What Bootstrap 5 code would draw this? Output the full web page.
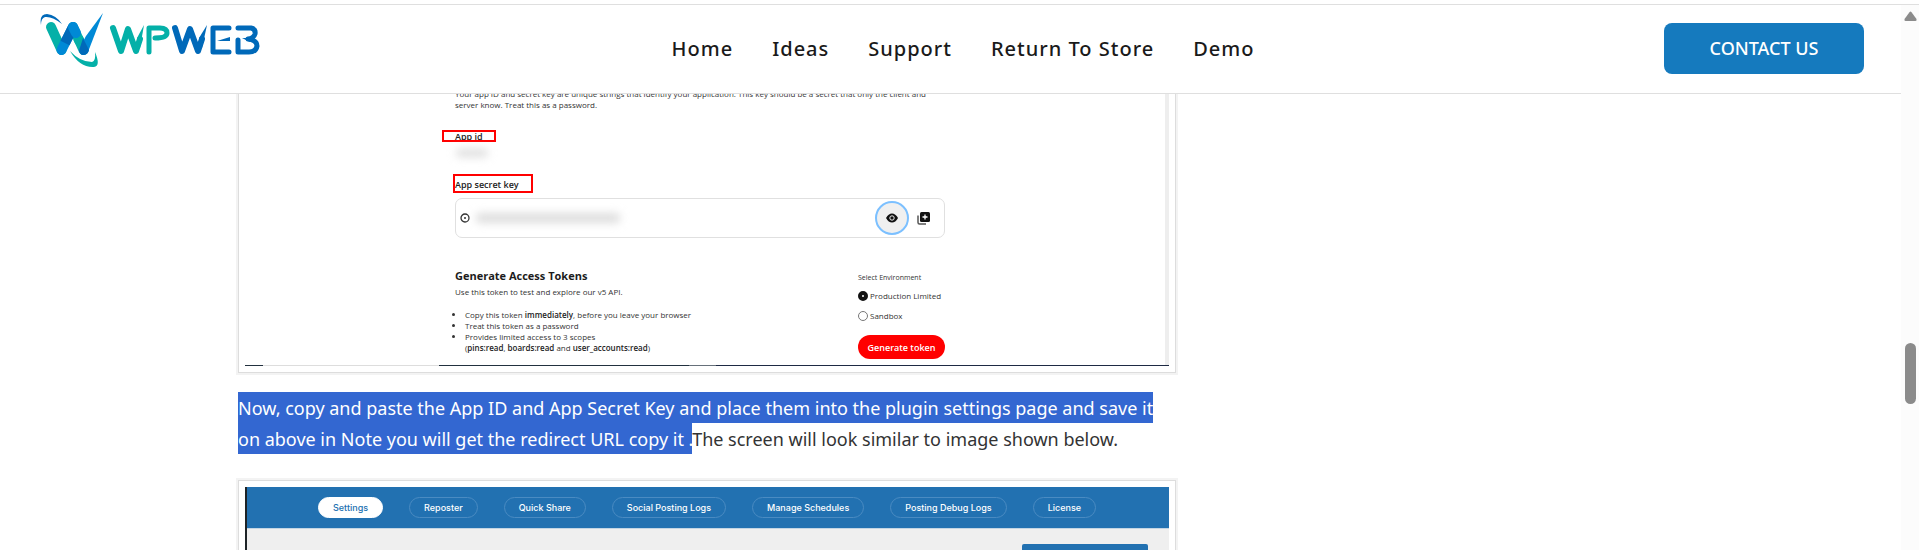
<!DOCTYPE html>
<html lang="en">
<head>
<meta charset="utf-8">
<meta name="viewport" content="width=device-width, initial-scale=1">
<title>WPWeb Documentation</title>
<link rel="stylesheet" href="https://cdn.jsdelivr.net/npm/bootstrap@5.3.0/dist/css/bootstrap.min.css">
<style>
html{background:#fff}
body{font-family:"Open Sans",sans-serif;color:#333;font-size:18px;line-height:31px;height:100vh;overflow:hidden;background:#fff;padding-top:4px}
.window-pane{border-top:1px solid #dfdfdf}
.site-head{height:89px;background:#fff;border-bottom:1px solid #dfdfdf;z-index:5;display:grid;grid-template-columns:1fr auto 1fr;padding:0 37px 2px 40px}
.site-logo{width:220px;height:56px;margin-top:8px}
.site-nav{gap:39px;margin-left:22px;font-family:"Noto Sans",sans-serif;font-size:20px;font-weight:500;letter-spacing:1px}
.site-nav a{color:#1a1a1a;text-decoration:none}
.btn-contact{--bs-btn-bg:#157abe;--bs-btn-color:#fff;--bs-btn-hover-bg:#1269a4;--bs-btn-hover-color:#fff;width:200px;height:51px;border-radius:8px;font-family:"Noto Sans",sans-serif;font-size:18px;font-weight:500}
.page-col{max-width:1425px}
.doc-col{max-width:938px}
.shot{border:1px solid #ddd;box-shadow:0 0 0 2px #f3f3f3;padding:6px;background:#fff}
.first-shot{margin-top:-23px}
.dev{font-size:8px;line-height:11px;color:#333;border-right:4px solid #eee;padding:10px 220px 6px 210px}
.dev b{font-weight:600;color:#222}
.red-box{border:2px solid #f00;color:#222;font-size:9px;font-weight:600}
.box-id{width:54px;height:12px;margin-left:-13px;padding-left:11px;line-height:10px;margin-top:20px;overflow:hidden}
.box-key{width:80px;height:19px;margin-left:-2px;line-height:18px;margin-top:17px}
.smudge{background:#ddd;filter:blur(4px);border-radius:4px}
.smudge-id{width:32px;height:8px;margin:7px 0 0 1px}
.smudge-key{width:144px;height:10px;margin-left:6px}
.key-box{border:1px solid #e0e0e0;border-radius:7px;height:40px;margin-top:5px;padding:0 14px 0 4px}
.eye-btn{width:34px;height:34px;border-radius:50%;border:2px solid #7cc0ff;background:#f0f0f0;padding:0}
.copy-btn{border:0;background:none;padding:0;margin-left:8px;width:13px}
.access{margin-top:30px}
.dev h2{font-size:11px;line-height:16px;font-weight:700;color:#1c1c1c;margin:0 0 2px}
.dev ul{padding-left:10px;margin:12px 0 0}
.env{width:87px;padding-top:5px}
.env legend{font-size:7px;line-height:10px;margin:0 0 7px}
.env label{line-height:12px;white-space:nowrap;gap:2px;margin-bottom:8px}
.env input{appearance:none;flex:none;width:10px;height:10px;border:1px solid #777;border-radius:50%;margin:0}
.env input:checked{border:4px solid #111}
.btn-token{background:#f00;color:#fff;border:0;border-radius:12px;height:24px;width:87px;font-weight:600;font-size:9px;padding:0;margin-top:13px}
.strip{height:1px;background:linear-gradient(90deg,#22313f 0 2%,#ddd 2% 21%,#22313f 21% 48%,#66707a 48% 51%,#1e2a44 51%)}
.lead-text{font-family:"Noto Sans",sans-serif;margin:20px 0 25px;padding-right:8px}
.picked{background:rgba(0,65,198,.8);color:#fff;padding:4px 0 3px}
.plugin{background:#efefef;border-left:2px solid #1d2327}
.plugin-nav{background:#2271b1;border-bottom:1px solid #c3d5e4;height:42px;padding-left:71px;gap:26px;font-family:Inter,sans-serif;font-size:9px;font-weight:500;line-height:19px}
.plugin-nav a{border:1px solid #4a8bc2;border-radius:11px;padding:0 14px;color:#fff;text-decoration:none;white-space:nowrap}
.plugin-nav a.on{background:#fff;border-color:#fff;color:#2271b1}
.save-btn{width:126px;height:28px;background:#2271b1;border:0;border-radius:2px;margin:15px 21px 40px 0}
.rail{width:18px;background:#fcfcfc;border-top:1px solid #dfdfdf;padding-top:6px}
.rail-thumb{width:11px;height:61px;border-radius:6px;background:#8b8b8b;margin-top:322px}
</style>
</head>
<body class="d-flex">
<div class="window-pane flex-grow-1 overflow-hidden">
  <header class="site-head position-relative">
    <a href="#" aria-label="WPWeb">
      <svg class="site-logo d-block" viewBox="40 13 220 56">
        <g fill="none" stroke-linecap="round" stroke-linejoin="round">
          <path d="M51 27 61.500 50" stroke="#04b0a8" stroke-width="10"/>
          <path d="M73 27 83.500 50" stroke="#04b0a8" stroke-width="10"/>
          <path d="M61.500 50 73 27" stroke="#0089d6" stroke-width="10"/>
          <path d="M65 43 73 27" stroke="#0069b9" stroke-width="10" stroke-linecap="butt"/>
          <path d="M73 27 76 33" stroke="#0089d6" stroke-width="10"/>
          <path d="M78 38 80 42" stroke="#04b0a8" stroke-width="10" stroke-linecap="butt"/>
        </g>
        <path d="M103 13 88 52Q86 55 82 55L79 49 86 36Z" fill="#0089d6"/>
        <path d="M79 51 83 38 89 50Q88 55 83 55 80 55 79 51Z" fill="#0069b9"/>
        <path d="M41 25Q39 14 47 14 56 15 62 24 52 16 45 17 41 18 41 25Z" fill="#0069b9"/>
        <path d="M70 51Q80 62 92 62 96 61 95 52 101 66 94 67 80 68 70 51Z" fill="#04b0a8"/>
        <g fill="none" stroke-linecap="round" stroke-linejoin="round" stroke-width="6">
          <g stroke="#04b0a8">
            <path d="M113 28 121 51 128 29 136 51 140 39"/>
            <path d="M149 52V28H160Q167 28 167 33 167 38 155 38" stroke-width="5"/>
          </g>
          <g stroke="#0069b9">
            <path d="M175 28 182 51 190 29 198 51 202 39"/>
            <path d="M229 28H213V52H229" stroke-width="5"/>
            <path d="M238 28H251Q256 29 255 34 254 38 248 39 257 40 257 46 256 52 249 52H238V40" stroke-width="5"/>
          </g>
        </g>
        <path d="M137 38 144 25 140 48Z" fill="#04b0a8"/>
        <path d="M199 38 207 25 202 48Z" fill="#0069b9"/>
        <path d="M217 41 230 37V41ZM242 38 250 38V42Z" fill="#0069b9"/>
      </svg>
    </a>
    <nav class="site-nav d-flex align-items-center">
      <a href="#">Home</a><a href="#">Ideas</a><a href="#">Support</a><a href="#">Return To Store</a><a href="#">Demo</a>
    </nav>
    <div class="d-flex align-items-center justify-content-end"><button type="button" class="btn btn-contact">CONTACT US</button></div>
  </header>
  <main class="page-col mx-auto">
    <div class="doc-col">
      <section class="shot first-shot">
        <div class="dev">
          <div>Your app ID and secret key are unique strings that identify your application. This key should be a secret that only the client and<br>server know. Treat this as a password.</div>
          <div class="red-box box-id">App id</div>
          <div class="smudge smudge-id"></div>
          <div class="red-box box-key">App secret key</div>
          <div class="key-box d-flex align-items-center">
            <svg width="10" height="10" viewBox="0 0 10 10"><circle cx="5" cy="5" r="4" fill="none" stroke="#333" stroke-width="1.300"/><circle cx="5" cy="5" r="1" fill="#333"/></svg>
            <div class="smudge smudge-key"></div>
            <button type="button" class="eye-btn d-flex align-items-center justify-content-center ms-auto" aria-label="Show key">
              <svg width="12" height="10" viewBox="0 0 12 10"><path d="M0 5Q2.500.5 6 .5T12 5Q9.500 9.500 6 9.500T0 5Z" fill="#111"/><circle cx="6" cy="5" r="2.200" fill="none" stroke="#eee"/></svg>
            </button>
            <button type="button" class="copy-btn d-flex" aria-label="Copy key">
              <svg width="13" height="13" viewBox="0 0 13 13"><path d="M1 3.500V10.500Q1 12 2.500 12H9" fill="none" stroke="#555" stroke-width="1.500"/><rect x="3" width="10" height="10" rx="1.500" fill="#111"/><path d="M8 2.500V7.500M5.500 5H10.500" stroke="#fff" stroke-width="1.300"/></svg>
            </button>
          </div>
          <div class="access d-flex justify-content-between">
            <div>
              <h2>Generate Access Tokens</h2>
              <div>Use this token to test and explore our v5 API.</div>
              <ul>
                <li>Copy this token <b>immediately</b>, before you leave your browser</li>
                <li>Treat this token as a password</li>
                <li>Provides limited access to 3 scopes<br>(<b>pins:read</b>, <b>boards:read</b> and <b>user_accounts:read</b>)</li>
              </ul>
            </div>
            <fieldset class="env">
              <legend>Select Environment</legend>
              <label class="d-flex align-items-center"><input type="radio" name="env" checked>Production Limited</label>
              <label class="d-flex align-items-center"><input type="radio" name="env">Sandbox</label>
              <button type="button" class="btn-token d-block">Generate token</button>
            </fieldset>
          </div>
        </div>
        <div class="strip"></div>
      </section>
      <p class="lead-text"><span class="picked">Now, copy and paste the App ID and App Secret Key and place them into the plugin settings page and save it on above in Note you will get the redirect URL copy it .</span>The screen will look similar to image shown below.</p>
      <section class="shot">
        <div class="plugin">
          <nav class="plugin-nav d-flex align-items-center">
            <a class="on" href="#">Settings</a><a href="#">Reposter</a><a href="#">Quick Share</a><a href="#">Social Posting Logs</a><a href="#">Manage Schedules</a><a href="#">Posting Debug Logs</a><a href="#">License</a>
          </nav>
          <div class="d-flex justify-content-end"><button type="button" class="save-btn" aria-label="Save"></button></div>
        </div>
      </section>
    </div>
  </main>
</div>
<div class="rail d-flex flex-column align-items-center flex-shrink-0">
  <svg class="flex-shrink-0" width="13" height="10" viewBox="0 0 13 10"><path d="M5.500 1.200Q6.500 0 7.500 1.200L12.500 8Q13 10 11.500 10H1.500Q0 10 .5 8Z" fill="#8b8b8b"/></svg>
  <div class="rail-thumb flex-shrink-0"></div>
</div>
<script src="https://cdn.jsdelivr.net/npm/bootstrap@5.3.0/dist/js/bootstrap.bundle.min.js"></script>
</body>
</html>
